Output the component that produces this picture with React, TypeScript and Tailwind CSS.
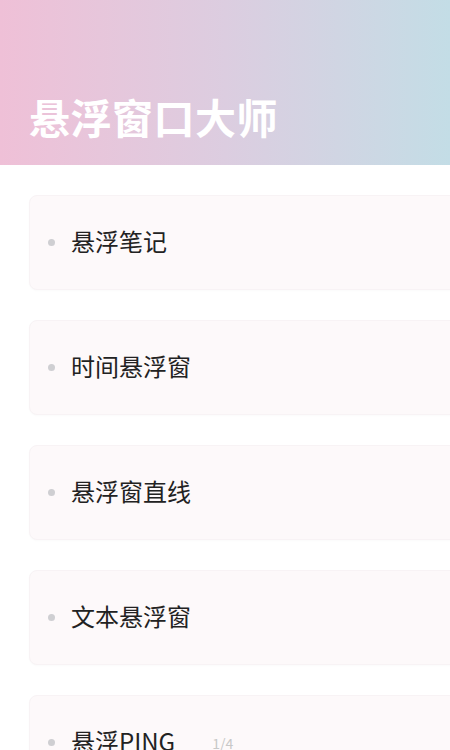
const ITEMS: { label: string; extra?: string }[] = [
  { label: "悬浮笔记" },
  { label: "时间悬浮窗" },
  { label: "悬浮窗直线" },
  { label: "文本悬浮窗" },
  { label: "悬浮PING", extra: "1/4" },
];

export default function App() {
  return (
    <div
      className="w-[450px] h-[750px] overflow-hidden bg-white"
      style={{ fontFamily: '"Noto Sans CJK SC", "Noto Sans", sans-serif' }}
    >
      {/* Header */}
      <div className="h-[165px] bg-linear-to-r from-[#efc0d7] via-[#dccde0] to-[#c3dde6] flex items-end px-[29px] pb-[28px]">
        <h1 className="text-[41px] leading-none font-bold text-white tracking-[0.5px]">
          悬浮窗口大师
        </h1>
      </div>

      {/* List */}
      <div className="flex flex-col gap-[30px] pt-[30px] pl-[29px]">
        {ITEMS.map((item) => (
          <div
            key={item.label}
            className="w-[460px] h-[95px] shrink-0 rounded-[8px] bg-[#fdf9fa] border border-[#f8f3f5] shadow-[0_1px_2px_rgba(0,0,0,0.02)] flex items-center pl-[18px]"
          >
            <span className="w-[7px] h-[7px] rounded-full bg-[#cfcfd2]" />
            <span className="ml-[16px] text-[24px] leading-none text-[#222] -mt-[3px]">
              {item.label}
            </span>
            {item.extra && (
              <span className="ml-[37px] text-[14px] text-[#c8c8c8] pt-[2px]">
                {item.extra}
              </span>
            )}
          </div>
        ))}
      </div>
    </div>
  );
}
